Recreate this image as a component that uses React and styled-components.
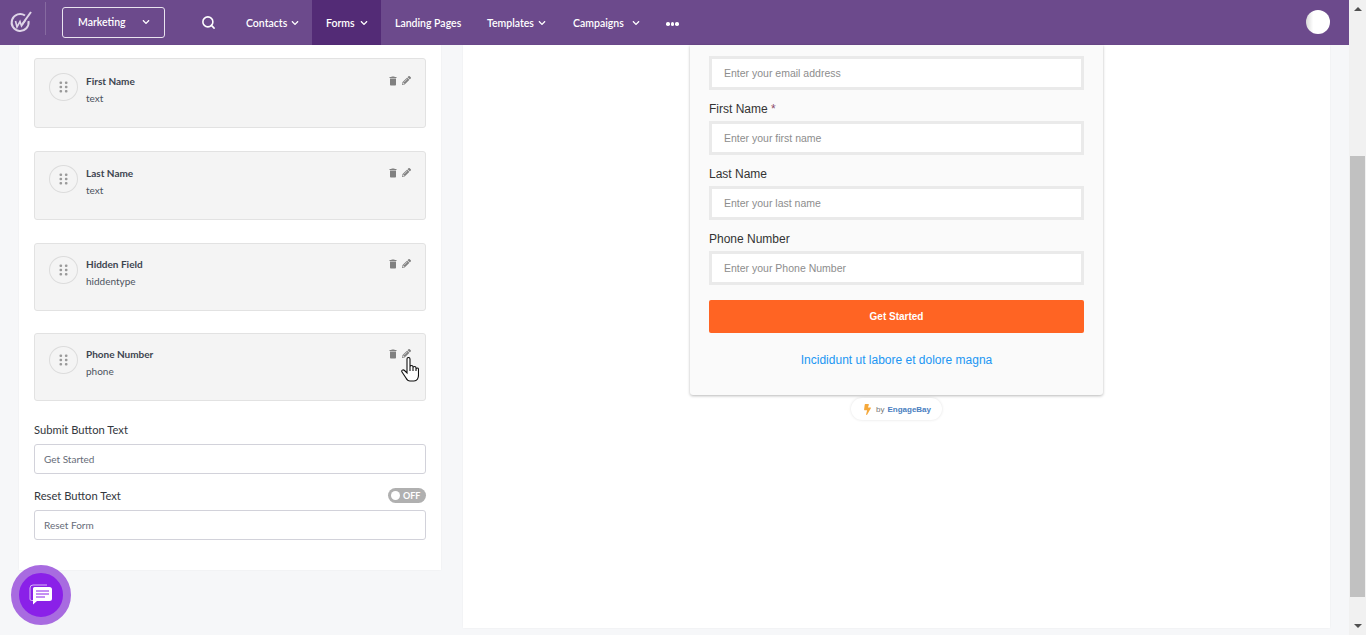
import React from "react";
import styled, { createGlobalStyle } from "styled-components";
import { FaPencilAlt, FaChevronDown, FaBolt } from "react-icons/fa";
import { MdDelete } from "react-icons/md";
import { Search } from "lucide-react";

const GlobalStyle = createGlobalStyle`
    html, body {
        margin: 0;
        padding: 0;
        height: 100%;
        overflow: hidden;
    }
    body {
        font-family: Lato, "Noto Sans", sans-serif;
        background: #f6f7f9;
    }
    * {
        box-sizing: border-box;
    }
`;

const Page = styled.div`
    display: flex;
    width: 1366px;
    height: 635px;
    position: relative;
    overflow: hidden;
`;

const Main = styled.div`
    flex: 1;
    display: flex;
    flex-direction: column;
    min-width: 0;
`;

const Nav = styled.nav`
    height: 45px;
    flex: none;
    display: flex;
    align-items: stretch;
    background: #6c4a8c;
    color: #fff;
    padding-right: 19px;
`;

const LogoBox = styled.div`
    width: 46px;
    height: 33px;
    flex: none;
    display: flex;
    align-items: center;
    margin-top: 2px;
    padding: 7px 0 0 9px;
    border-right: 1px solid rgba(255, 255, 255, 0.18);
`;

const Select = styled.div`
    width: 103px;
    height: 31px;
    margin: 7px 0 0 16px;
    padding: 0 14px 2px 15px;
    display: flex;
    align-items: center;
    justify-content: space-between;
    border: 1px solid #e9e3ef;
    border-radius: 3px;
    font-size: 10.5px;
    font-weight: 600;
`;

const SearchButton = styled.div`
    width: 67px;
    flex: none;
    display: flex;
    align-items: center;
    padding-left: 36px;
`;

const NavItem = styled.div`
    width: ${(p) => p.$width}px;
    flex: none;
    display: flex;
    align-items: center;
    justify-content: space-between;
    padding: 0 13px 0 14px;
    font-size: 10.5px;
    font-weight: 600;
    white-space: nowrap;
    background: ${(p) => (p.$active ? "#532b76" : "transparent")};
`;

const NavDots = styled.div`
    display: flex;
    gap: 1px;
    margin-left: 13px;
    align-items: center;
    padding-top: 3px;

    span {
        width: 3.5px;
        height: 3.5px;
        border-radius: 50%;
        background: #fff;
    }
`;

const Avatar = styled.div`
    width: 24px;
    height: 24px;
    margin: 10px 0 0 auto;
    border-radius: 50%;
    background: linear-gradient(90deg, #d8d8d8 0%, #fff 30%);
`;

const Content = styled.div`
    flex: 1;
    display: flex;
    gap: 22px;
    padding: 0 19px;
    min-height: 0;
    align-items: flex-start;
`;

const LeftPanel = styled.section`
    width: 422px;
    height: 525px;
    flex: none;
    padding: 13px 15px 0;
    background: #fff;
    box-shadow: 0 0 2px rgba(0, 0, 0, 0.05);
`;

const FieldCard = styled.div`
    position: relative;
    height: ${(p) => p.$height}px;
    margin-bottom: ${(p) => p.$gap}px;
    padding: ${(p) => p.$top}px 14px 0;
    display: flex;
    gap: 8px;
    background: #f4f4f4;
    border: 1px solid #e2e2e2;
    border-radius: 3px;
`;

const Handle = styled.div`
    width: 29px;
    height: 28px;
    flex: none;
    display: flex;
    align-items: center;
    justify-content: center;
    border: 1px solid #dcdcdc;
    border-radius: 50%;
    color: #9a9a9a;
`;

const FieldText = styled.div`
    display: flex;
    flex-direction: column;
    gap: 3px;
    padding-top: 1px;
`;

const FieldName = styled.div`
    font-size: 10px;
    line-height: 14px;
    font-weight: 700;
    color: #3d4450;
`;

const FieldType = styled.div`
    font-size: 10px;
    line-height: 14px;
    color: #4c5360;
`;

const CardActions = styled.div`
    display: flex;
    align-items: center;
    gap: 3px;
    margin-left: auto;
    height: 13px;
    margin-top: 1px;
    color: #808080;
`;

const LabelRow = styled.div`
    display: flex;
    align-items: center;
    justify-content: space-between;
    height: 16px;
    margin-bottom: 7px;
    font-size: 11.2px;
    color: #33373d;
`;

const TextBox = styled.div`
    height: 30px;
    margin-bottom: 13px;
    padding: 0 9px;
    display: flex;
    align-items: center;
    background: #fff;
    border: 1px solid #d2d2da;
    border-radius: 3px;
    font-size: 10px;
    color: #666c78;
`;

const Toggle = styled.div`
    width: 38px;
    height: 15px;
    display: flex;
    align-items: center;
    gap: 3px;
    padding: 0 3px;
    border-radius: 8px;
    background: #b0b0b0;
    color: #fff;
    font-size: 9px;
    font-weight: 700;

    &::before {
        content: "";
        width: 9px;
        height: 9px;
        border-radius: 50%;
        background: #fff;
    }
`;

const RightPanel = styled.section`
    width: 867px;
    height: 583px;
    flex: none;
    display: flex;
    flex-direction: column;
    align-items: center;
    background: #fff;
    box-shadow: 0 0 2px rgba(0, 0, 0, 0.05);
`;

const FormCard = styled.div`
    width: 413px;
    height: 350px;
    padding: 11px 19px 0;
    background: #fafafa;
    border-radius: 0 0 3px 3px;
    box-shadow: 0 1px 3px rgba(0, 0, 0, 0.28);
    font-family: "Liberation Sans", Arial, sans-serif;
`;

const FormLabel = styled.div`
    height: 31px;
    padding-top: 12px;
    font-size: 12px;
    line-height: 14px;
    color: #333;

    em {
        font-style: normal;
        color: #8a4a6a;
    }
`;

const FormInput = styled.div`
    height: 34px;
    padding: 0 12px;
    display: flex;
    align-items: center;
    background: #fff;
    border: 3px solid #eaeaea;
    font-size: 10.5px;
    color: #8d8d8d;
`;

const SubmitButton = styled.div`
    height: 33px;
    margin-top: 15px;
    display: flex;
    align-items: center;
    justify-content: center;
    background: #ff6423;
    border-radius: 2px;
    color: #fff;
    font-size: 10px;
    font-weight: 700;
`;

const FormLink = styled.div`
    margin-top: 19px;
    text-align: center;
    font-size: 12px;
    line-height: 16px;
    color: #2196f3;
`;

const PoweredBy = styled.div`
    height: 22px;
    margin-top: 3px;
    padding: 0 11px;
    display: flex;
    align-items: center;
    gap: 3px;
    border-radius: 11px;
    background: #fff;
    box-shadow: 0 0 3px rgba(0, 0, 0, 0.12);
    font-family: "Liberation Sans", Arial, sans-serif;
    font-size: 8px;
    color: #777;

    b {
        color: #4a80bf;
    }

    svg {
        color: #f5a83a;
        font-size: 11px;
    }
`;

const Scrollbar = styled.div`
    width: 17px;
    height: 635px;
    flex: none;
    display: flex;
    flex-direction: column;
    align-items: center;
    background: #f1f1f1;
`;

const ArrowUp = styled.div`
    width: 0;
    height: 0;
    margin-top: 7px;
    border-left: 4px solid transparent;
    border-right: 4px solid transparent;
    border-bottom: 4px solid #505050;
`;

const ArrowDown = styled.div`
    width: 0;
    height: 0;
    margin-top: 27px;
    border-left: 4px solid transparent;
    border-right: 4px solid transparent;
    border-top: 4px solid #505050;
`;

const Thumb = styled.div`
    width: 15px;
    height: 441px;
    margin-top: 145px;
    background: #c1c1c1;
`;

const ChatButton = styled.div`
    position: absolute;
    left: 11px;
    top: 565px;
    width: 60px;
    height: 60px;
    display: flex;
    align-items: center;
    justify-content: center;
    border-radius: 50%;
    background: #8a20e8;
    border: 8px solid #a86be0;
`;

const HandCursor = styled.svg`
    position: absolute;
    right: 6px;
    top: 23px;
`;

const fields = [
    { name: "First Name", type: "text", height: 70, gap: 23, top: 14 },
    { name: "Last Name", type: "text", height: 69, gap: 23, top: 13 },
    { name: "Hidden Field", type: "hiddentype", height: 68, gap: 22, top: 12 },
    { name: "Phone Number", type: "phone", height: 68, gap: 20, top: 12, hover: true },
];

const formFields = [
    { label: "First Name", required: true, placeholder: "Enter your first name" },
    { label: "Last Name", placeholder: "Enter your last name" },
    { label: "Phone Number", placeholder: "Enter your Phone Number" },
];

function Logo() {
    return (
        <svg width="24" height="24" viewBox="0 0 24 24" fill="none" stroke="#dfd5e8">
            <path d="M16 5.5A8.5 8.5 0 1 0 19.5 11" strokeWidth="2" />
            <path d="M6.5 11l1.5 6 3-5.5 1.5 4.5 4-6" strokeWidth="1.6" />
            <path d="M13 14.5L22 2" strokeWidth="2" />
        </svg>
    );
}

function GripIcon() {
    return (
        <svg width="9" height="12" viewBox="0 0 9 12" fill="currentColor">
            <rect x="0.5" y="0.5" width="2.6" height="2.6" rx="1" />
            <rect x="5.9" y="0.5" width="2.6" height="2.6" rx="1" />
            <rect x="0.5" y="4.7" width="2.6" height="2.6" rx="1" />
            <rect x="5.9" y="4.7" width="2.6" height="2.6" rx="1" />
            <rect x="0.5" y="8.9" width="2.6" height="2.6" rx="1" />
            <rect x="5.9" y="8.9" width="2.6" height="2.6" rx="1" />
        </svg>
    );
}

function ChatIcon() {
    return (
        <svg width="24" height="22" viewBox="0 0 24 22" fill="none">
            <path d="M4 16.5H2.5A1.5 1.5 0 0 1 1 15V4a3 3 0 0 1 3-3h14" stroke="#d9b8f7" strokeWidth="1" />
            <path d="M5.5 3h15A2.5 2.5 0 0 1 23 5.5v9a2.5 2.5 0 0 1-2.5 2.5H8l-4 3.5V4.5A1.5 1.5 0 0 1 5.5 3z" fill="#fff" />
            <path d="M7 7h13M7 10h13M7 13h9" stroke="#8a20e8" strokeWidth="1" />
        </svg>
    );
}

function Hand() {
    return (
        <HandCursor width="18" height="25" viewBox="0 0 18 25" fill="#fff" stroke="#111" strokeWidth="1.1">
            <path d="M6 2a1.5 1.5 0 0 1 3 0v8a1.5 1.5 0 0 1 3 0v1a1.5 1.5 0 0 1 3 0v1a1.3 1.3 0 0 1 2.5 0v6c0 3-1.5 6-4.5 6H9c-2 0-3-1-4-3l-4-6c-1-1.5 1-3 2.5-1.5L6 16z" />
            <path d="M9 10v4M12 11v3M15 12v2" />
        </HandCursor>
    );
}

function NavLink({ label, width, active, menu }) {
    return (
        <NavItem $active={active} $width={width}>
            {label}
            {menu && <FaChevronDown size={8} />}
        </NavItem>
    );
}

function App() {
    return (
        <Page>
            <GlobalStyle />
            <Main>
                <Nav>
                    <LogoBox>
                        <Logo />
                    </LogoBox>
                    <Select>
                        Marketing
                        <FaChevronDown size={8} />
                    </Select>
                    <SearchButton>
                        <Search size={15} strokeWidth={2.5} />
                    </SearchButton>
                    <NavLink label="Contacts" width={80} menu />
                    <NavLink label="Forms" width={69} menu active />
                    <NavLink label="Landing Pages" width={92} />
                    <NavLink label="Templates" width={86} menu />
                    <NavLink label="Campaigns" width={94} menu />
                    <NavDots>
                        <span />
                        <span />
                        <span />
                    </NavDots>
                    <Avatar />
                </Nav>
                <Content>
                    <LeftPanel>
                        {fields.map((field) => (
                            <FieldCard
                                key={field.name}
                                $height={field.height}
                                $gap={field.gap}
                                $top={field.top}
                            >
                                <Handle>
                                    <GripIcon />
                                </Handle>
                                <FieldText>
                                    <FieldName>{field.name}</FieldName>
                                    <FieldType>{field.type}</FieldType>
                                </FieldText>
                                <CardActions>
                                    <MdDelete size={12} />
                                    <FaPencilAlt size={9} />
                                </CardActions>
                                {field.hover && <Hand />}
                            </FieldCard>
                        ))}
                        <LabelRow>Submit Button Text</LabelRow>
                        <TextBox>Get Started</TextBox>
                        <LabelRow>
                            Reset Button Text
                            <Toggle>OFF</Toggle>
                        </LabelRow>
                        <TextBox>Reset Form</TextBox>
                    </LeftPanel>
                    <RightPanel>
                        <FormCard>
                            <FormInput>Enter your email address</FormInput>
                            {formFields.map((field) => (
                                <React.Fragment key={field.label}>
                                    <FormLabel>
                                        {field.label}
                                        {field.required && <em> *</em>}
                                    </FormLabel>
                                    <FormInput>{field.placeholder}</FormInput>
                                </React.Fragment>
                            ))}
                            <SubmitButton>Get Started</SubmitButton>
                            <FormLink>Incididunt ut labore et dolore magna</FormLink>
                        </FormCard>
                        <PoweredBy>
                            <FaBolt />
                            by <b>EngageBay</b>
                        </PoweredBy>
                    </RightPanel>
                </Content>
            </Main>
            <Scrollbar>
                <ArrowUp />
                <Thumb />
                <ArrowDown />
            </Scrollbar>
            <ChatButton>
                <ChatIcon />
            </ChatButton>
        </Page>
    );
}

export default App;
